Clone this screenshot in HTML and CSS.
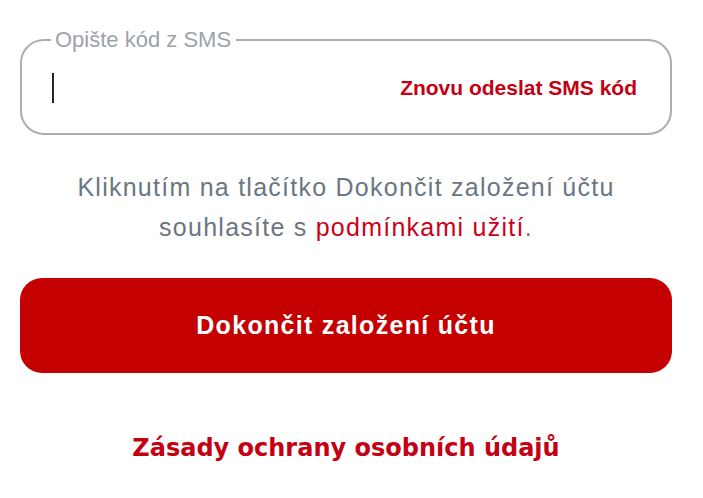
FILE: index.html
```html
<!DOCTYPE html>
<html lang="cs">
<head>
<meta charset="utf-8">
<title>Ověření SMS</title>
<link rel="stylesheet" href="styles.css">
</head>
<body>
<main class="page">
  <fieldset class="sms-field">
    <legend class="sms-label">Opište kód z SMS</legend>
    <div class="sms-row">
      <span class="caret"></span>
      <a class="resend" href="#">Znovu odeslat SMS kód</a>
    </div>
  </fieldset>
  <p class="terms">Kliknutím na tlačítko Dokončit založení účtu<br>souhlasíte s <a class="terms-link" href="#">podmínkami užití</a>.</p>
  <button class="submit" type="button">Dokončit založení účtu</button>
  <p class="privacy"><a href="#">Zásady ochrany osobních údajů</a></p>
</main>
</body>
</html>
```

FILE: styles.css
```css
html, body {
  margin: 0;
  padding: 0;
  background: #ffffff;
}

.page {
  width: 652px;
  margin-left: 20px;
  padding-top: 28px;
  font-family: "Liberation Sans", Arial, sans-serif;
}

.sms-field {
  margin: 0;
  padding: 0 33px 9px 30px;
  border: 2px solid #a9aeb3;
  border-radius: 24px;
  min-width: 0;
}

.sms-label {
  margin-left: -1px;
  padding: 0 5px 0 4px;
  font-size: 22px;
  line-height: 24px;
  color: #9ca3aa;
}

.sms-row {
  height: 72px;
  display: flex;
  align-items: center;
  justify-content: space-between;
}

.caret {
  width: 2px;
  height: 30px;
  background: #1b2838;
}

.resend {
  font-size: 21px;
  font-weight: bold;
  color: #c40012;
  text-decoration: none;
}

.terms {
  margin: 32px 0 0;
  text-align: center;
  font-size: 25px;
  line-height: 40px;
  letter-spacing: 1.25px;
  color: #6b7682;
}

.terms-link {
  color: #cc0018;
  text-decoration: none;
}

.submit {
  display: block;
  width: 100%;
  height: 95px;
  margin-top: 31px;
  border: none;
  border-radius: 22px;
  background: #c40000;
  color: #ffffff;
  font-family: "Liberation Sans", Arial, sans-serif;
  font-size: 25px;
  font-weight: bold;
  letter-spacing: 1.3px;
}

.privacy {
  margin: 61px 0 0;
  text-align: center;
  font-family: "DejaVu Sans", Verdana, sans-serif;
  font-size: 24px;
  line-height: 28px;
  font-weight: bold;
}

.privacy a {
  color: #c40012;
  text-decoration: none;
}
```
